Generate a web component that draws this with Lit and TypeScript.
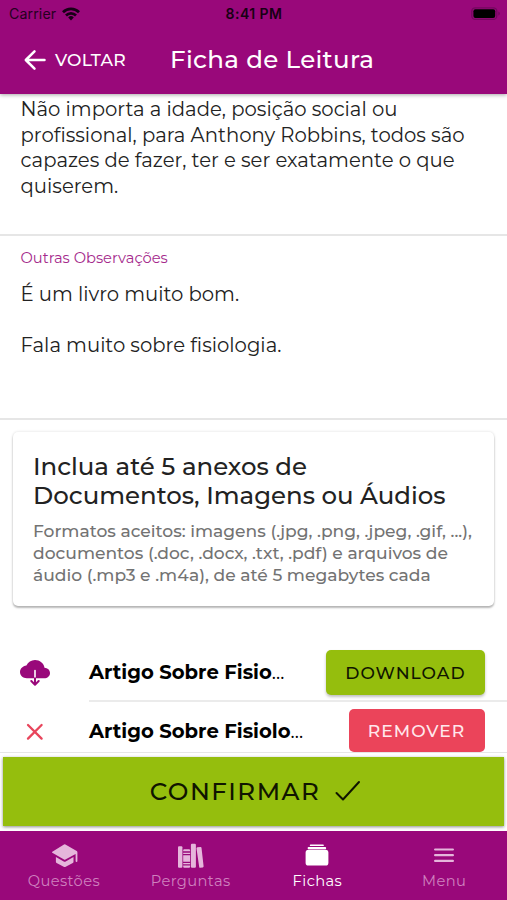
import { LitElement, html, css, svg } from "lit";
import { customElement, property } from "lit/decorators.js";

const glyphs: Record<string, unknown> = {
  wifi: svg`<svg width="18" height="14" viewBox="0 0 18 14" fill="none" stroke="#180016" stroke-width="2.7">
    <path d="M1 5.2a11.4 11.4 0 0 1 16 0M4 8.5a7 7 0 0 1 10 0"/><path d="M6.2 10.4a4 4 0 0 1 5.6 0L9 13.6z" fill="#180016" stroke="none"/></svg>`,
  battery: svg`<svg width="30" height="14" viewBox="0 0 30 14"><rect x=".8" y=".8" width="25" height="11.6" rx="3.5" fill="none" stroke="#74085f" stroke-width="1.3"/><rect x="2.4" y="2.2" width="21.8" height="8.8" rx="2" fill="#000"/><path d="M27.3 4.4q1.6.6 1.6 2.2t-1.6 2.2z" fill="#74085f"/></svg>`,
  back: svg`<svg width="22" height="22" viewBox="0 0 22 22" fill="none" stroke="#fff" stroke-width="2.5" stroke-linecap="round" stroke-linejoin="round"><path d="M10.500 2.300 1.800 11l8.700 8.700M2.200 11h18.300"/></svg>`,
  cloud: svg`<svg width="30" height="26" viewBox="0 0 30 26"><path fill="#99087a" d="M24.5 7.7C23.7 3.2 19.8 0 15 0 11.200 0 8 2.100 6.400 5.500 2.700 6 0 8.600 0 12.100 0 15.800 3 18.300 6.800 18.300H14.200V10.500a.8.8 0 0 1 1.600 0V18.300H24.200C27.500 18.300 30 16.200 30 13 30 9.900 27.500 7.900 24.500 7.700Z"/><path d="M15 18.300v6M11.300 21l3.700 3.700L18.700 21" fill="none" stroke="#99087a" stroke-width="2" stroke-linecap="round" stroke-linejoin="round"/></svg>`,
  close: svg`<svg width="18" height="18" viewBox="0 0 18 18" fill="none" stroke="#e8455c" stroke-width="2.3" stroke-linecap="round"><path d="m2 2 13.600 13.600M15.600 2 2 15.600"/></svg>`,
  check: svg`<svg width="26" height="22" viewBox="0 0 26 22" fill="none" stroke="#101500" stroke-width="2" stroke-linecap="round" stroke-linejoin="round"><path d="m1.500 13 6.500 6.500L24 2"/></svg>`,
  school: svg`<svg width="26" height="24" viewBox="-.7 .5 26 24" overflow="visible" fill="#e5b6db"><path d="M13 .8Q13.300.8 13.700 1L25 7.600q.7.500.7 1.200v8.700a.9.9 0 0 1-1.800 0v-7L13.700 16q-.7.400-1.400 0L.6 9.200Q-.1 8.700.6 8.200L12.300 1Q12.700.8 13 .8Z"/><path d="M4.200 13.600 12 18.100q1 .5 2 0l7.800-4.500v4.600q0 .8-.7 1.200L14 23.300q-1 .5-2 0l-7.100-3.900q-.7-.4-.7-1.200Z"/></svg>`,
  library: svg`<svg width="26" height="25" viewBox="0 .5 26 25" overflow="visible" fill="#e5b6db"><rect x="0" y="2.700" width="4.400" height="21.600" rx="1.100"/><path d="M6.300 5.700h4.700q1.100 0 1.100 1.100v1H5.200v-1q0-1.100 1.100-1.100ZM5.200 9.300h6.900v1.300H5.200ZM5.200 11.700h6.900v6.600H5.200ZM5.200 19.500h6.900v1.200H5.200ZM5.200 22h6.900v1.200q0 1.100-1.100 1.100H6.300q-1.100 0-1.100-1.100Z"/><rect x="12.900" y=".3" width="5" height="24" rx="1.100"/><path d="m19.400 3.800 3-.4q1-.1 1.100.9l2.100 18.500q.1 1-.9 1.200l-2.400.3q-1 .1-1.100-.9L18.500 5q-.1-1 .9-1.200Z"/></svg>`,
  albums: svg`<svg width="24" height="22" viewBox="0 .5 24 22" overflow="visible" fill="#fff"><rect x="4.800" y="0" width="14" height="1.600" rx=".7"/><rect x="2.700" y="2.500" width="18.400" height="2.200" rx=".8"/><rect x=".6" y="5.300" width="22.800" height="15.800" rx="2.900"/></svg>`,
  menu: svg`<svg width="22" height="18" viewBox="0 0 22 18" fill="none" stroke="#e5b6db" stroke-width="2.200" stroke-linecap="round"><path d="M2.100 2.500h17.800M2.100 8.200h17.800M2.100 13.900h17.800"/></svg>`,
};

@customElement("nav-tab")
class NavTab extends LitElement {
  @property() icon = "";
  @property() label = "";
  @property({ type: Boolean, reflect: true }) active = false;
  static styles = css`
    :host { display: flex; flex-direction: column; align-items: center; flex: 1; min-width: 0; padding: 12px 0 0 1px; box-sizing: border-box; color: #cf80bf; }
    :host([active]) { color: #fff; }
    .icon { height: 26px; display: flex; align-items: center; }
    .label { font-size: 14.700px; line-height: 20px; letter-spacing: .4px; margin-top: 2px; }
    svg { display: block; }
  `;
  render() {
    return html`<div class="icon">${glyphs[this.icon]}</div><div class="label">${this.label}</div>`;
  }
}

@customElement("app-root")
class AppRoot extends LitElement {
  static styles = css`
    :host { display: flex; flex-direction: column; width: 507px; height: 900px; background: #fff; overflow: hidden; font-family: Montserrat, Inter, "Liberation Sans", sans-serif; color: #222; font-variant-ligatures: none; }
    * { box-sizing: border-box; }
    svg { display: block; flex: none; }
    header { flex: none; height: 94px; background: #99087a; color: #fff; box-shadow: 0 1px 4px rgba(0,0,0,.35); z-index: 1; }
    .status { height: 27px; display: grid; grid-template-columns: 1fr auto 1fr; align-items: center; padding: 0 6px 0 9px; font-family: Inter, "Liberation Sans", sans-serif; font-size: 14.200px; color: #260020; }
    .carrier { display: flex; align-items: center; gap: 6px; letter-spacing: .1px; }
    .clock { font-weight: 600; font-size: 14px; letter-spacing: .45px; margin-left: -2px; color: #180014; }
    .battery { justify-self: end; }
    .toolbar { height: 65px; display: flex; align-items: center; padding: 0 24px; }
    .back { width: 146px; display: flex; align-items: center; gap: 9px; font-size: 17.150px; font-weight: 500; letter-spacing: .25px; }
    h1 { margin: 0 0 1px; font-size: 24.500px; font-weight: 500; letter-spacing: .33px; line-height: 30px; }
    main { flex: 1; min-height: 0; overflow: hidden; }
    .field { border-bottom: 2px solid #e6e6e6; padding: 0 20.500px; }
    .first { height: 142px; padding-top: 3px; }
    .second { height: 184px; padding-top: 13px; }
    .text { font-size: 19.650px; line-height: 25.700px; white-space: pre; }
    .caption { font-size: 14.700px; line-height: 18px; color: #a52a8c; margin-bottom: 15px; }
    .card { margin: 12px 13px 0; height: 174px; border-radius: 5px; padding: 20px 20px 0; box-shadow: 0 2px 2px rgba(0,0,0,.26), 0 0 3px rgba(0,0,0,.14); white-space: pre; }
    h2 { margin: 0; font-size: 24.450px; line-height: 29.300px; font-weight: 500; }
    .hint { margin-top: 9px; font-size: 17.120px; line-height: 22px; color: #737373; font-weight: 500; }
    .files { margin-top: 37px; }
    .row { display: flex; height: 59px; padding-left: 20px; }
    .lead { width: 69px; display: flex; align-items: center; }
    .lead.small { padding: 0 0 0 6px; }
    .body { flex: 1; display: flex; align-items: center; justify-content: space-between; padding: 2px 22px 0 0; border-bottom: 2px solid #ebebeb; }
    .name { font-size: 19.600px; color: #000; white-space: nowrap; padding-bottom: 1px; }
    .name b { font-weight: 700; }
    .btn { height: 45px; display: flex; align-items: center; justify-content: center; border-radius: 5px; font-size: 17.150px; font-weight: 500; letter-spacing: 1.030px; padding-bottom: 1px; }
    .get { width: 159px; background: #95be0d; color: #101500; box-shadow: 0 2px 3px rgba(0,0,0,.25); }
    .del { width: 136px; height: 43px; margin-bottom: 2px; padding: 0 1px 0 0; background: #eb445a; color: #ffe8ec; }
    footer { flex: none; height: 79px; border-top: 1px solid #e6e6e6; padding: 4px 3px; background: #fff; }
    .confirm { height: 69px; background: #95be0d; color: #101500; display: flex; align-items: center; justify-content: center; gap: 15px; padding: 0 0 1px 4px; font-size: 24.500px; font-weight: 500; letter-spacing: 1.470px; box-shadow: 0 1px 3px rgba(0,0,0,.45); }
    nav { flex: none; height: 69px; display: flex; background: #99087a; }
  `;
  render() {
    return html`
      <header>
        <div class="status">
          <div class="carrier"><span>Carrier</span>${glyphs.wifi}</div>
          <div class="clock">8:41 PM</div>
          <div class="battery">${glyphs.battery}</div>
        </div>
        <div class="toolbar">
          <div class="back">${glyphs.back}<span>VOLTAR</span></div>
          <h1>Ficha de Leitura</h1>
        </div>
      </header>
      <main>
        <section class="field first"><div class="text">Não importa a idade, posição social ou
profissional, para Anthony Robbins, todos são
capazes de fazer, ter e ser exatamente o que
quiserem.</div></section>
        <section class="field second">
          <div class="caption">Outras Observações</div>
          <div class="text">É um livro muito bom.

Fala muito sobre fisiologia.</div>
        </section>
        <section class="card"><h2>Inclua até 5 anexos de
Documentos, Imagens ou Áudios</h2><div class="hint">Formatos aceitos: imagens (.jpg, .png, .jpeg, .gif, ...),
documentos (.doc, .docx, .txt, .pdf) e arquivos de
áudio (.mp3 e .m4a), de até 5 megabytes cada</div></section>
        <section class="files">
          <div class="row">
            <div class="lead">${glyphs.cloud}</div>
            <div class="body"><span class="name"><b>Artigo Sobre Fisio</b>...</span><div class="btn get">DOWNLOAD</div></div>
          </div>
          <div class="row">
            <div class="lead small">${glyphs.close}</div>
            <div class="body"><span class="name"><b>Artigo Sobre Fisiolo</b>...</span><div class="btn del">REMOVER</div></div>
          </div>
        </section>
      </main>
      <footer><div class="confirm"><span>CONFIRMAR</span>${glyphs.check}</div></footer>
      <nav>
        <nav-tab icon="school" label="Questões"></nav-tab>
        <nav-tab icon="library" label="Perguntas"></nav-tab>
        <nav-tab icon="albums" label="Fichas" active></nav-tab>
        <nav-tab icon="menu" label="Menu"></nav-tab>
      </nav>
    `;
  }
}
